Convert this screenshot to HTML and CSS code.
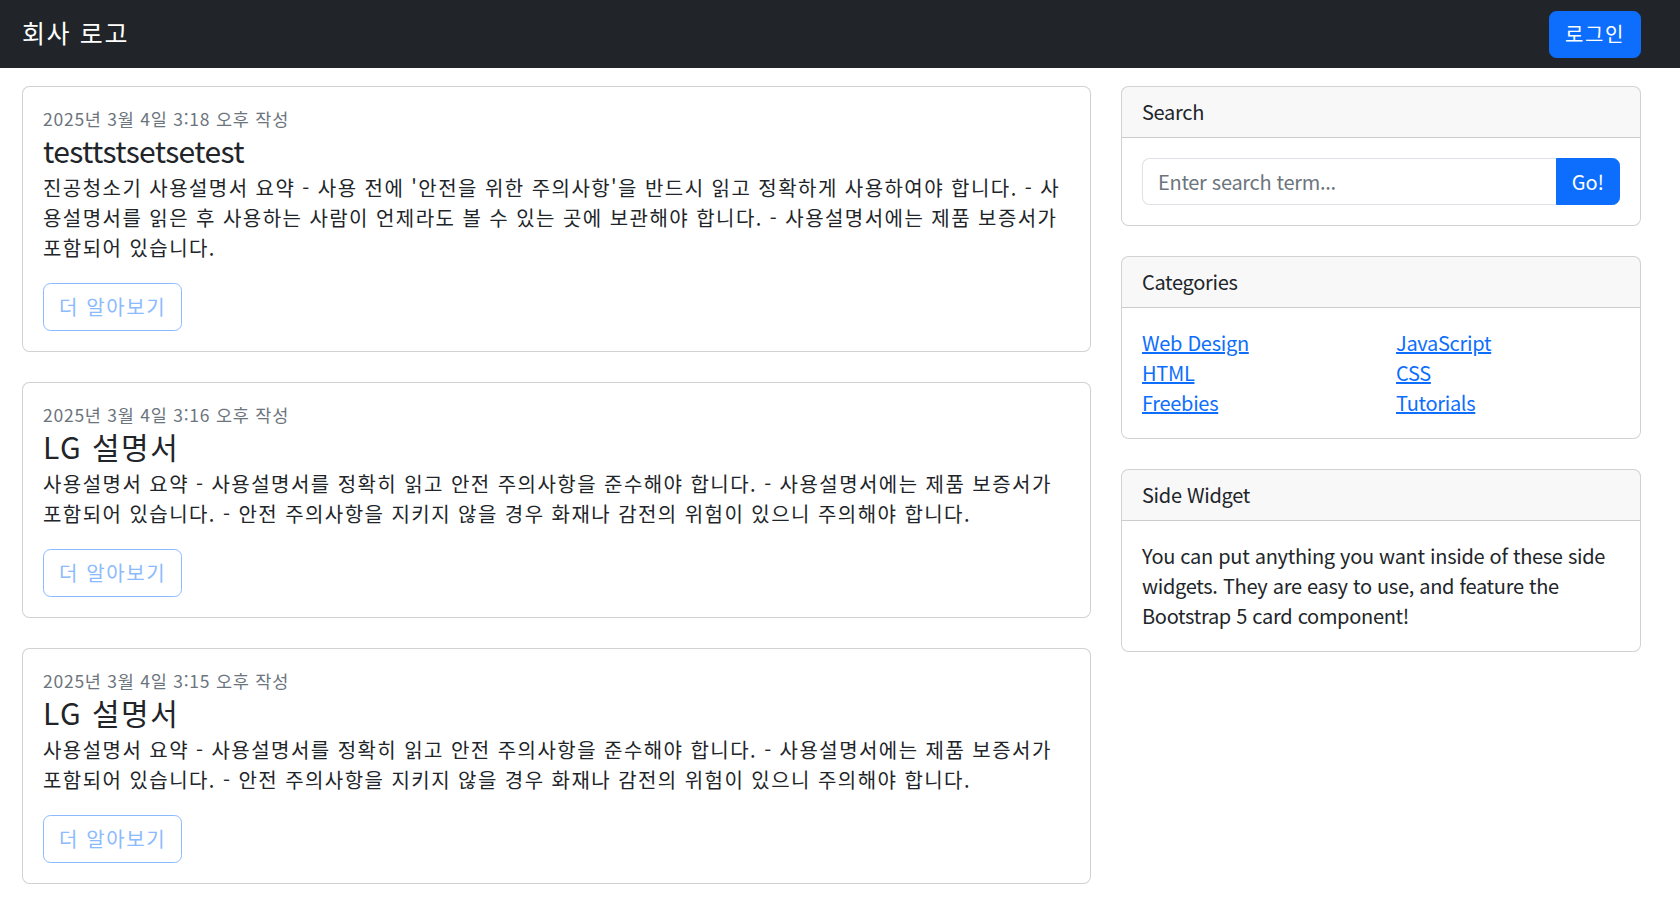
FILE: index.html
```html
<!DOCTYPE html>
<html lang="ko">
<head>
<meta charset="utf-8">
<title>회사 로고</title>
<link rel="stylesheet" href="styles.css">
</head>
<body>
<nav class="navbar">
  <a class="brand" href="#">회사 로고</a>
  <a class="btn-login" href="#">로그인</a>
</nav>

<div class="page">
  <main class="main-col">
    <article class="card">
      <div class="card-body">
        <div class="post-date">2025년 3월 4일 3:18 오후 작성</div>
        <h2 class="post-title post-title-latin">testtstsetsetest</h2>
        <p class="post-text">진공청소기 사용설명서 요약 - 사용 전에 '안전을 위한 주의사항'을 반드시 읽고 정확하게 사용하여야 합니다. - 사용설명서를 읽은 후 사용하는 사람이 언제라도 볼 수 있는 곳에 보관해야 합니다. - 사용설명서에는 제품 보증서가 포함되어 있습니다.</p>
        <a class="btn-more" href="#">더 알아보기</a>
      </div>
    </article>
    <article class="card">
      <div class="card-body">
        <div class="post-date">2025년 3월 4일 3:16 오후 작성</div>
        <h2 class="post-title post-title-ko">LG 설명서</h2>
        <p class="post-text">사용설명서 요약 - 사용설명서를 정확히 읽고 안전 주의사항을 준수해야 합니다. - 사용설명서에는 제품 보증서가 포함되어 있습니다. - 안전 주의사항을 지키지 않을 경우 화재나 감전의 위험이 있으니 주의해야 합니다.</p>
        <a class="btn-more" href="#">더 알아보기</a>
      </div>
    </article>
    <article class="card">
      <div class="card-body">
        <div class="post-date">2025년 3월 4일 3:15 오후 작성</div>
        <h2 class="post-title post-title-ko">LG 설명서</h2>
        <p class="post-text">사용설명서 요약 - 사용설명서를 정확히 읽고 안전 주의사항을 준수해야 합니다. - 사용설명서에는 제품 보증서가 포함되어 있습니다. - 안전 주의사항을 지키지 않을 경우 화재나 감전의 위험이 있으니 주의해야 합니다.</p>
        <a class="btn-more" href="#">더 알아보기</a>
      </div>
    </article>
  </main>

  <aside class="side-col">
    <section class="card">
      <div class="card-header">Search</div>
      <div class="card-body">
        <div class="input-group">
          <input class="search-input" type="text" placeholder="Enter search term...">
          <button class="btn-go" type="button">Go!</button>
        </div>
      </div>
    </section>
    <section class="card">
      <div class="card-header">Categories</div>
      <div class="card-body">
        <div class="cat-grid">
          <ul class="cat-list">
            <li><a href="#">Web Design</a></li>
            <li><a href="#">HTML</a></li>
            <li><a href="#">Freebies</a></li>
          </ul>
          <ul class="cat-list">
            <li><a href="#">JavaScript</a></li>
            <li><a href="#">CSS</a></li>
            <li><a href="#">Tutorials</a></li>
          </ul>
        </div>
      </div>
    </section>
    <section class="card">
      <div class="card-header">Side Widget</div>
      <div class="card-body">
        <p class="widget-text">You can put anything you want inside of these side widgets. They are easy to use, and feature the Bootstrap 5 card component!</p>
      </div>
    </section>
  </aside>
</div>
</body>
</html>
```
FILE: styles.css
```css
* {
  box-sizing: border-box;
}

body {
  margin: 0;
  font-family: "Noto Sans CJK KR", "Noto Sans", sans-serif;
  font-size: 20px;
  line-height: 30px;
  color: #212529;
  background: #fff;
}

/* ---------- navbar ---------- */
.navbar {
  display: flex;
  align-items: center;
  justify-content: space-between;
  height: 68px;
  padding: 0 39px 0 22px;
  background: #212529;
}

.brand {
  padding-bottom: 4px;
  color: #fff;
  font-size: 25px;
  line-height: 37px;
  letter-spacing: 1.6px;
  text-decoration: none;
}

.btn-login {
  display: block;
  padding: 7.5px 15px;
  border: 1px solid #0d6efd;
  border-radius: 7.5px;
  background: #0d6efd;
  color: #fff;
  line-height: 30px;
  letter-spacing: 1.6px;
  text-decoration: none;
}

/* ---------- layout ---------- */
.page {
  display: flex;
  align-items: flex-start;
  gap: 30px;
  padding: 18px 39px 0 22px;
}

.main-col {
  flex: 1 1 auto;
  min-width: 0;
}

.side-col {
  flex: 0 0 520px;
  letter-spacing: -0.3px;
}

/* ---------- cards ---------- */
.card {
  border: 1px solid rgba(0, 0, 0, 0.175);
  border-radius: 7.5px;
  background: #fff;
  margin-bottom: 30px;
}

.card-header {
  padding: 10px 20px;
  line-height: 30px;
  background: rgba(33, 37, 41, 0.03);
  border-bottom: 1px solid rgba(0, 0, 0, 0.175);
  border-radius: 6.5px 6.5px 0 0;
}

.card-body {
  padding: 20px;
}

.main-col .card-body {
  display: flex;
  flex-direction: column;
  align-items: flex-start;
}

/* ---------- posts ---------- */
.post-date {
  margin-bottom: 6px;
  font-size: 17.5px;
  line-height: 24px;
  color: #6c757d;
  letter-spacing: 0.75px;
}

.post-title {
  margin: 0 0 10px;
  font-size: 30px;
  line-height: 26px;
  font-weight: 400;
}

.post-title-latin {
  letter-spacing: -0.6px;
}

.post-title-ko {
  letter-spacing: 1.5px;
}

.post-text {
  margin: 0 0 20px;
  letter-spacing: 1.45px;
}

.btn-more {
  display: block;
  padding: 8px 15px;
  border: 1px solid #8bbafe;
  border-radius: 7.5px;
  color: #8bbafe;
  line-height: 30px;
  letter-spacing: 1.6px;
  text-decoration: none;
}

/* ---------- search ---------- */
.input-group {
  display: flex;
}

.search-input {
  flex: 1 1 auto;
  min-width: 0;
  height: 47px;
  padding: 7.5px 15px;
  font: inherit;
  font-size: 20px;
  line-height: 30px;
  letter-spacing: -0.3px;
  color: #212529;
  border: 1px solid #dee2e6;
  border-right: 0;
  border-radius: 7.5px 0 0 7.5px;
  outline: none;
}

.search-input::placeholder {
  color: #6c757d;
}

.btn-go {
  height: 47px;
  padding: 7.5px 15px;
  font: inherit;
  font-size: 20px;
  line-height: 30px;
  color: #fff;
  background: #0d6efd;
  border: 1px solid #0d6efd;
  border-radius: 0 7.5px 7.5px 0;
  cursor: pointer;
}

/* ---------- categories ---------- */
.cat-grid {
  display: grid;
  grid-template-columns: 1fr 1fr;
  column-gap: 30px;
}

.cat-list {
  list-style: none;
  margin: 0;
  padding: 0;
}

.cat-list a {
  color: #0d6efd;
  text-decoration: underline;
}

/* ---------- widget ---------- */
.widget-text {
  margin: 0;
}
```
